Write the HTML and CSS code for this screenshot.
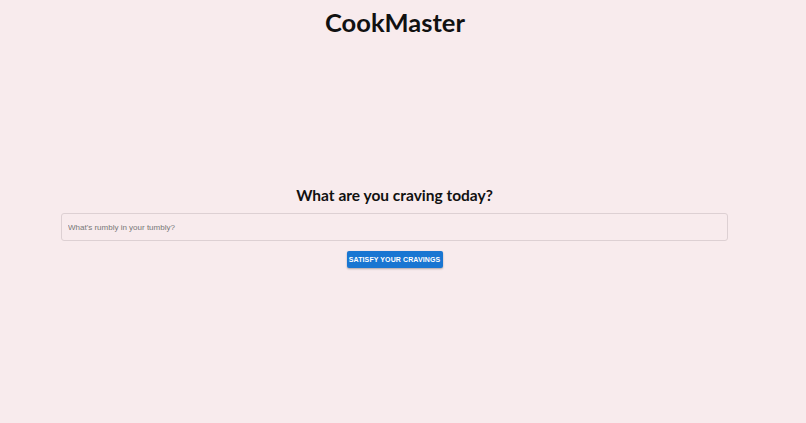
FILE: index.html
```html
<!DOCTYPE html>
<html>
<head>
<meta charset="utf-8">
<link rel="stylesheet" href="styles.css">
</head>
<body>
<div class="page">
  <header class="top">
    <h1 class="brand">CookMaster</h1>
  </header>
  <main class="search">
    <h2 class="prompt">What are you craving today?</h2>
    <input class="field" type="text" placeholder="What's rumbly in your tumbly?">
    <button class="go">SATISFY YOUR CRAVINGS</button>
  </main>
</div>
</body>
</html>
```
FILE: styles.css
```css
html, body {
  margin: 0;
  padding: 0;
  background: #f8ebed;
  height: 100%;
}
body {
  font-family: Lato, "Open Sans", sans-serif;
  color: #111;
}
.page {
  width: 790px;
}
.top {
  display: flex;
  justify-content: center;
  padding-top: 5px;
}
.brand {
  margin: 0;
  font-size: 25.5px;
  font-weight: 700;
  line-height: 34px;
}
.search {
  display: flex;
  flex-direction: column;
  align-items: center;
  padding: 145px 62px 0 61px;
}
.prompt {
  margin: 0;
  font-size: 15.5px;
  font-weight: 700;
  line-height: 22px;
}
.field {
  margin-top: 7px;
  box-sizing: border-box;
  width: 100%;
  height: 28px;
  border: 1px solid #ddd0d3;
  border-radius: 3px;
  background: #f8ebed;
  padding: 0 6px;
  font-family: "Liberation Sans", Arial, sans-serif;
  font-size: 8px;
  color: #333;
  outline: none;
}
.field::placeholder {
  color: #777;
}
.go {
  margin-top: 10px;
  height: 17px;
  padding: 0;
  width: 96px;
  white-space: nowrap;
  border: none;
  border-radius: 2px;
  background: #1976d2;
  color: #fff;
  font-family: "Liberation Sans", Arial, sans-serif;
  font-weight: 700;
  font-size: 7px;
  letter-spacing: 0.1px;
  box-shadow: 0 1px 2px rgba(0,0,0,0.3);
}
```
